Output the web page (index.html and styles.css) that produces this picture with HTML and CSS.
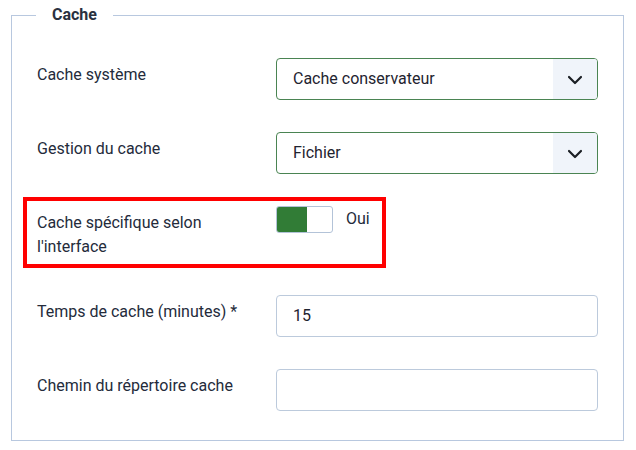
FILE: index.html
```html
<!DOCTYPE html>
<html lang="fr">
<head>
<meta charset="utf-8">
<title>Cache</title>
<link rel="stylesheet" href="styles.css">
</head>
<body>
<fieldset class="options">
  <legend class="options-legend">Cache</legend>

  <div class="row">
    <label class="row-label">Cache système</label>
    <div class="row-control">
      <div class="select is-valid">
        <span class="select-value">Cache conservateur</span>
        <span class="select-arrow"><svg width="16" height="10" viewBox="0 0 16 10"><path d="M2 2 L8 8 L14 2" fill="none" stroke="#1b1f24" stroke-width="2.2" stroke-linecap="round" stroke-linejoin="round"/></svg></span>
      </div>
    </div>
  </div>

  <div class="row">
    <label class="row-label">Gestion du cache</label>
    <div class="row-control">
      <div class="select is-valid">
        <span class="select-value">Fichier</span>
        <span class="select-arrow"><svg width="16" height="10" viewBox="0 0 16 10"><path d="M2 2 L8 8 L14 2" fill="none" stroke="#1b1f24" stroke-width="2.2" stroke-linecap="round" stroke-linejoin="round"/></svg></span>
      </div>
    </div>
  </div>

  <div class="row row-highlight">
    <label class="row-label">Cache spécifique selon l'interface</label>
    <div class="row-control switch-line">
      <span class="switch"><span class="switch-on"></span></span>
      <span class="switch-text">Oui</span>
    </div>
    <span class="highlight-box"></span>
  </div>

  <div class="row">
    <label class="row-label">Temps de cache (minutes) *</label>
    <div class="row-control">
      <div class="input">15</div>
    </div>
  </div>

  <div class="row row-last">
    <label class="row-label">Chemin du répertoire cache</label>
    <div class="row-control">
      <div class="input"></div>
    </div>
  </div>
</fieldset>
</body>
</html>
```

FILE: styles.css
```css
html, body {
  margin: 0;
  padding: 0;
  background: #ffffff;
}

body {
  font-family: Roboto, "Noto Sans", "Liberation Sans", sans-serif;
  font-size: 16px;
  line-height: 24px;
  color: #242b3b;
  padding-top: 3px;
}

.options {
  margin: 0 12px 0 11px;
  padding: 31px 25px 29px 25px;
  border: 1px solid #b8c8df;
  min-width: 0;
}

.options-legend {
  font-weight: 700;
  font-size: 16px;
  line-height: 24px;
  padding: 0 16px;
  margin-left: -1px;
  color: #2a3140;
}

.row {
  display: flex;
  align-items: flex-start;
  margin-bottom: 32px;
  position: relative;
}

.row-last {
  margin-bottom: 0;
}

.row-label {
  width: 239px;
  flex: 0 0 239px;
  box-sizing: border-box;
  padding: 5px 12px 4px 0;
}

.row-control {
  flex: 1 1 auto;
  min-width: 0;
}

.select {
  display: flex;
  height: 42px;
  box-sizing: border-box;
  border: 1px solid #b8c6d8;
  border-radius: 4px;
  overflow: hidden;
  background: #fff;
}

.select.is-valid {
  border-color: #4a8452;
}

.select-value {
  flex: 1 1 auto;
  padding-left: 16px;
  line-height: 40px;
  color: #1f2430;
}

.select-arrow {
  flex: 0 0 44px;
  background: #f0f4fa;
  display: flex;
  align-items: center;
  justify-content: center;
  padding-top: 1px;
}

.input {
  height: 42px;
  box-sizing: border-box;
  border: 1px solid #bccadc;
  border-radius: 4px;
  padding-left: 16px;
  line-height: 40px;
  color: #1f2430;
}

.switch-line {
  display: flex;
  align-items: flex-start;
  gap: 13px;
}

.switch {
  display: flex;
  width: 57px;
  height: 27px;
  box-sizing: border-box;
  border: 1px solid #b3c3d8;
  border-radius: 3px;
  overflow: hidden;
  background: #fff;
}

.switch-on {
  width: 30px;
  height: 100%;
  background: #317c36;
}

.switch-text {
  line-height: 24px;
  margin-top: 1px;
}

.highlight-box {
  position: absolute;
  left: -14px;
  top: -9px;
  width: 363px;
  height: 71px;
  box-sizing: border-box;
  border: 4px solid #ff0000;
  pointer-events: none;
}
```
